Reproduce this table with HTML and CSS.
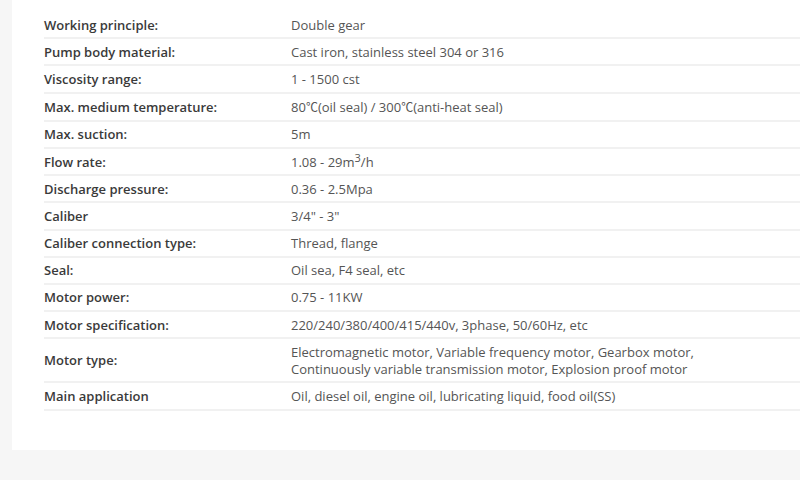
FILE: index.html
```html
<!DOCTYPE html>
<html>
<head>
<meta charset="utf-8">
<link rel="stylesheet" href="styles.css">
</head>
<body>
<div class="card">
  <table class="specs">
    <tr><th>Working principle:</th><td>Double gear</td></tr>
    <tr><th>Pump body material:</th><td>Cast iron, stainless steel 304 or 316</td></tr>
    <tr><th>Viscosity range:</th><td>1 - 1500 cst</td></tr>
    <tr><th>Max. medium temperature:</th><td>80<span class="deg">℃</span>(oil seal) / 300<span class="deg">℃</span>(anti-heat seal)</td></tr>
    <tr><th>Max. suction:</th><td>5m</td></tr>
    <tr><th>Flow rate:</th><td>1.08 - 29m<sup>3</sup>/h</td></tr>
    <tr><th>Discharge pressure:</th><td>0.36 - 2.5Mpa</td></tr>
    <tr><th>Caliber</th><td>3/4" - 3"</td></tr>
    <tr><th>Caliber connection type:</th><td>Thread, flange</td></tr>
    <tr><th>Seal:</th><td>Oil sea, F4 seal, etc</td></tr>
    <tr><th>Motor power:</th><td>0.75 - 11KW</td></tr>
    <tr><th>Motor specification:</th><td>220/240/380/400/415/440v, 3phase, 50/60Hz, etc</td></tr>
    <tr><th>Motor type:</th><td>Electromagnetic motor, Variable frequency motor, Gearbox motor,<br>Continuously variable transmission motor, Explosion proof motor</td></tr>
    <tr><th>Main application</th><td>Oil, diesel oil, engine oil, lubricating liquid, food oil(SS)</td></tr>
  </table>
</div>
</body>
</html>
```
FILE: styles.css
```css
html, body {
  margin: 0;
  padding: 0;
  background: #f6f6f6;
}
body {
  font-family: "Open Sans", "Liberation Sans", sans-serif;
  font-size: 13px;
  width: 800px;
  height: 480px;
  overflow: hidden;
}
.card {
  margin-left: 12px;
  height: 438px;
  padding: 12px 0 0 32px;
  background: #ffffff;
}
.specs {
  width: 756px;
  border-collapse: collapse;
}
.specs th,
.specs td {
  text-align: left;
  vertical-align: middle;
  line-height: 17px;
  padding: 4.6px 0 3.6px 0;
  border-bottom: 2px solid #f1f1f1;
}
.specs th {
  width: 247px;
  font-weight: 600;
  color: #3a3a3a;
}
.specs td {
  color: #555555;
}
.specs sup {
  font-size: 11px;
  line-height: 0;
  vertical-align: 5px;
}
.deg {
  font-family: "Noto Sans CJK SC", sans-serif;
  font-size: 12px;
}
```
